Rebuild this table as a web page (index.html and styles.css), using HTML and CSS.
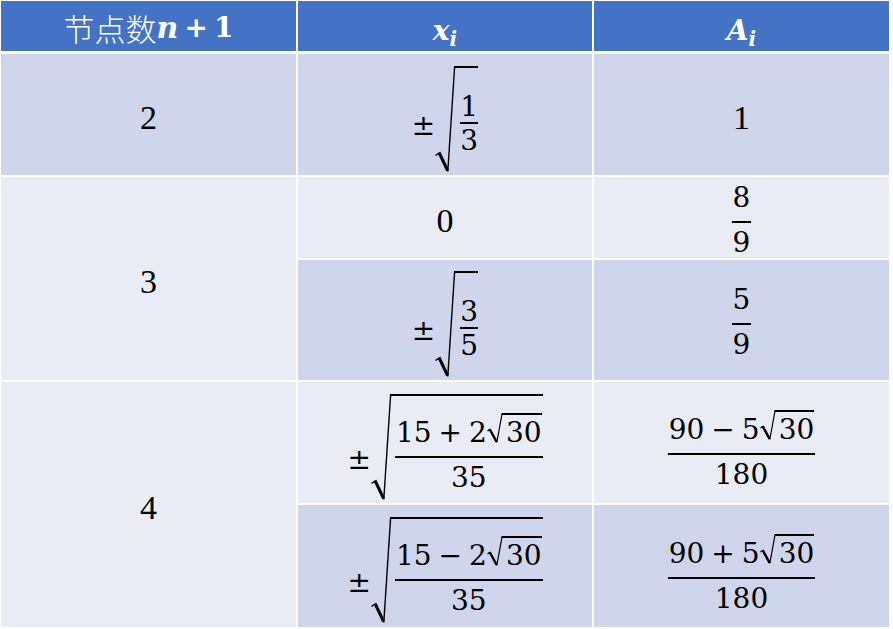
FILE: index.html
```html
<!DOCTYPE html>
<html lang="zh-CN">
<head>
<meta charset="utf-8">
<title>Gauss-Legendre</title>
<link rel="stylesheet" href="styles.css">
</head>
<body>
<div class="tbl">
  <div class="cell head head-label"><span class="cjk">节点数</span><span class="mb"><i>n</i></span><span class="mb op">+</span><span class="mb">1</span></div>
  <div class="cell head head-math"><span class="hvar">x</span><span class="hsub">i</span></div>
  <div class="cell head head-math"><span class="hvar">A</span><span class="hsub">i</span></div>

  <div class="cell dark plain">2</div>
  <div class="cell dark cell-sqrt">
    <span class="expr expr-sm">
      <span class="pm">±</span>
      <span class="sqrt">
        <svg class="rad" width="21" height="106" viewBox="0 0 21 106"><path d="M0.5 89.5 L4 87" stroke-width="1.5"/><path d="M4 86.5 L12.6 104.5" stroke-width="3"/><path d="M12.8 105.5 L19.6 1" stroke-width="1.4"/><path d="M19 1 L21 1" stroke-width="2"/></svg>
        <span class="radicand rad-sm">
          <span class="frac frac-tight"><span class="num">1</span><span class="den">3</span></span>
        </span>
      </span>
    </span>
  </div>
  <div class="cell dark plain">1</div>

  <div class="cell light plain span2">3</div>
  <div class="cell light plain">0</div>
  <div class="cell light cell-frac">
    <span class="frac"><span class="num">8</span><span class="den">9</span></span>
  </div>

  <div class="cell dark cell-sqrt">
    <span class="expr expr-sm">
      <span class="pm">±</span>
      <span class="sqrt">
        <svg class="rad" width="21" height="106" viewBox="0 0 21 106"><path d="M0.5 89.5 L4 87" stroke-width="1.5"/><path d="M4 86.5 L12.6 104.5" stroke-width="3"/><path d="M12.8 105.5 L19.6 1" stroke-width="1.4"/><path d="M19 1 L21 1" stroke-width="2"/></svg>
        <span class="radicand rad-sm">
          <span class="frac frac-tight"><span class="num">3</span><span class="den">5</span></span>
        </span>
      </span>
    </span>
  </div>
  <div class="cell dark cell-frac">
    <span class="frac"><span class="num">5</span><span class="den">9</span></span>
  </div>

  <div class="cell light plain span2">4</div>
  <div class="cell light cell-sqrt">
    <span class="expr expr-lg">
      <span class="pm">±</span>
      <span class="sqrt">
        <svg class="rad" width="21" height="106" viewBox="0 0 21 106"><path d="M0.5 89.5 L4 87" stroke-width="1.5"/><path d="M4 86.5 L12.6 104.5" stroke-width="3"/><path d="M12.8 105.5 L19.6 1" stroke-width="1.4"/><path d="M19 1 L21 1" stroke-width="2"/></svg>
        <span class="radicand rad-lg">
          <span class="frac">
            <span class="num"><span>15</span><span class="bop">+</span><span>2</span><span class="isqrt"><svg class="rad" width="16" height="30" viewBox="0 0 16 30"><path d="M0.5 18 L2.6 16.4" stroke-width="1.3"/><path d="M2.6 16 L9.6 28.8" stroke-width="2.4"/><path d="M9.8 29.5 L15 1" stroke-width="1.2"/><path d="M14.5 1 L16 1" stroke-width="2"/></svg><span class="irad-body">30</span></span></span>
            <span class="den">35</span>
          </span>
        </span>
      </span>
    </span>
  </div>
  <div class="cell light cell-frac-rad">
    <span class="frac">
      <span class="num"><span>90</span><span class="bop">−</span><span>5</span><span class="isqrt"><svg class="rad" width="16" height="30" viewBox="0 0 16 30"><path d="M0.5 18 L2.6 16.4" stroke-width="1.3"/><path d="M2.6 16 L9.6 28.8" stroke-width="2.4"/><path d="M9.8 29.5 L15 1" stroke-width="1.2"/><path d="M14.5 1 L16 1" stroke-width="2"/></svg><span class="irad-body">30</span></span></span>
      <span class="den">180</span>
    </span>
  </div>

  <div class="cell dark cell-sqrt">
    <span class="expr expr-lg">
      <span class="pm">±</span>
      <span class="sqrt">
        <svg class="rad" width="21" height="106" viewBox="0 0 21 106"><path d="M0.5 89.5 L4 87" stroke-width="1.5"/><path d="M4 86.5 L12.6 104.5" stroke-width="3"/><path d="M12.8 105.5 L19.6 1" stroke-width="1.4"/><path d="M19 1 L21 1" stroke-width="2"/></svg>
        <span class="radicand rad-lg">
          <span class="frac">
            <span class="num"><span>15</span><span class="bop">−</span><span>2</span><span class="isqrt"><svg class="rad" width="16" height="30" viewBox="0 0 16 30"><path d="M0.5 18 L2.6 16.4" stroke-width="1.3"/><path d="M2.6 16 L9.6 28.8" stroke-width="2.4"/><path d="M9.8 29.5 L15 1" stroke-width="1.2"/><path d="M14.5 1 L16 1" stroke-width="2"/></svg><span class="irad-body">30</span></span></span>
            <span class="den">35</span>
          </span>
        </span>
      </span>
    </span>
  </div>
  <div class="cell dark cell-frac-rad">
    <span class="frac">
      <span class="num"><span>90</span><span class="bop">+</span><span>5</span><span class="isqrt"><svg class="rad" width="16" height="30" viewBox="0 0 16 30"><path d="M0.5 18 L2.6 16.4" stroke-width="1.3"/><path d="M2.6 16 L9.6 28.8" stroke-width="2.4"/><path d="M9.8 29.5 L15 1" stroke-width="1.2"/><path d="M14.5 1 L16 1" stroke-width="2"/></svg><span class="irad-body">30</span></span></span>
      <span class="den">180</span>
    </span>
  </div>
</div>
</body>
</html>
```

FILE: styles.css
```css
html, body {
  margin: 0;
  padding: 0;
  background: #ffffff;
}

body {
  width: 893px;
  height: 629px;
  overflow: hidden;
}

.tbl {
  display: grid;
  grid-template-columns: 295px 294px 295px;
  grid-template-rows: 51px 121px 81px 120px 121px 122px;
  gap: 2px;
  width: max-content;
  margin: 1px 0 0 1px;
  background: #ffffff;
}

.cell {
  display: flex;
  justify-content: center;
  align-items: center;
  box-sizing: border-box;
  color: #000000;
  font-family: "DejaVu Serif", serif;
  font-size: 28px;
  line-height: 28px;
}

.dark { background: #CFD5EA; }
.light { background: #E9EBF5; }
.span2 { grid-row: span 2; }

/* header */
.head {
  background: #4472C4;
  color: #ffffff;
  margin-bottom: 1px;
  align-items: flex-start;
}

.head-label {
  padding-top: 10px;
  line-height: 34px;
}

.cjk {
  font-family: "Noto Sans CJK SC", "Noto Sans", sans-serif;
  font-size: 31px;
  font-weight: 300;
}

.mb {
  font-family: "DejaVu Serif", serif;
  font-weight: bold;
  font-size: 28px;
}

.mb i { font-size: 30px; }

.op { margin: 0 6px; }

.head-math {
  padding-top: 16px;
}

.hvar {
  font-weight: bold;
  font-style: italic;
  font-size: 28px;
  line-height: 28px;
}

.hsub {
  font-weight: bold;
  font-style: italic;
  font-size: 20px;
  line-height: 20px;
  margin-top: 12px;
}

/* plain numbers */
.plain {
  font-family: "Liberation Serif", serif;
  font-size: 34px;
  line-height: 40px;
  padding-top: 6px;
}

.cell-sqrt { padding-top: 8px; }
.cell-frac { padding-top: 5px; }
.cell-frac-rad { padding-top: 14px; }

/* math */
.expr {
  display: flex;
  align-items: flex-start;
}

.pm { line-height: 28px; }
.expr-sm .pm { margin-top: 46px; }
.expr-lg .pm { margin-top: 52px; }

.sqrt {
  display: flex;
  align-items: flex-start;
}

.rad {
  display: block;
  flex: none;
}

.rad path {
  stroke: #000000;
  fill: none;
  stroke-linecap: butt;
  stroke-linejoin: miter;
}

.radicand {
  display: flex;
  flex-direction: column;
  align-items: flex-start;
  box-sizing: border-box;
  height: 106px;
  border-top: 2px solid #000000;
}

.rad-sm { padding: 25px 0 0 4px; }
.rad-lg { padding: 17px 0 0 3px; }

.isqrt {
  display: flex;
  align-items: flex-start;
}

.irad-body {
  border-top: 2px solid #000000;
  padding: 4px 0 0 3px;
  line-height: 28px;
}

.frac {
  display: flex;
  flex-direction: column;
  align-items: stretch;
  text-align: center;
}

.num {
  display: flex;
  justify-content: center;
  align-items: flex-end;
  border-bottom: 2px solid #000000;
  padding: 0 1px 9px;
  line-height: 28px;
}

.den {
  padding: 6px 1px 0;
  line-height: 28px;
}

.frac-tight .num { padding: 0 0 1px; }
.frac-tight .den { padding: 3px 0 0; }

.bop { margin: 0 7px; }
```
